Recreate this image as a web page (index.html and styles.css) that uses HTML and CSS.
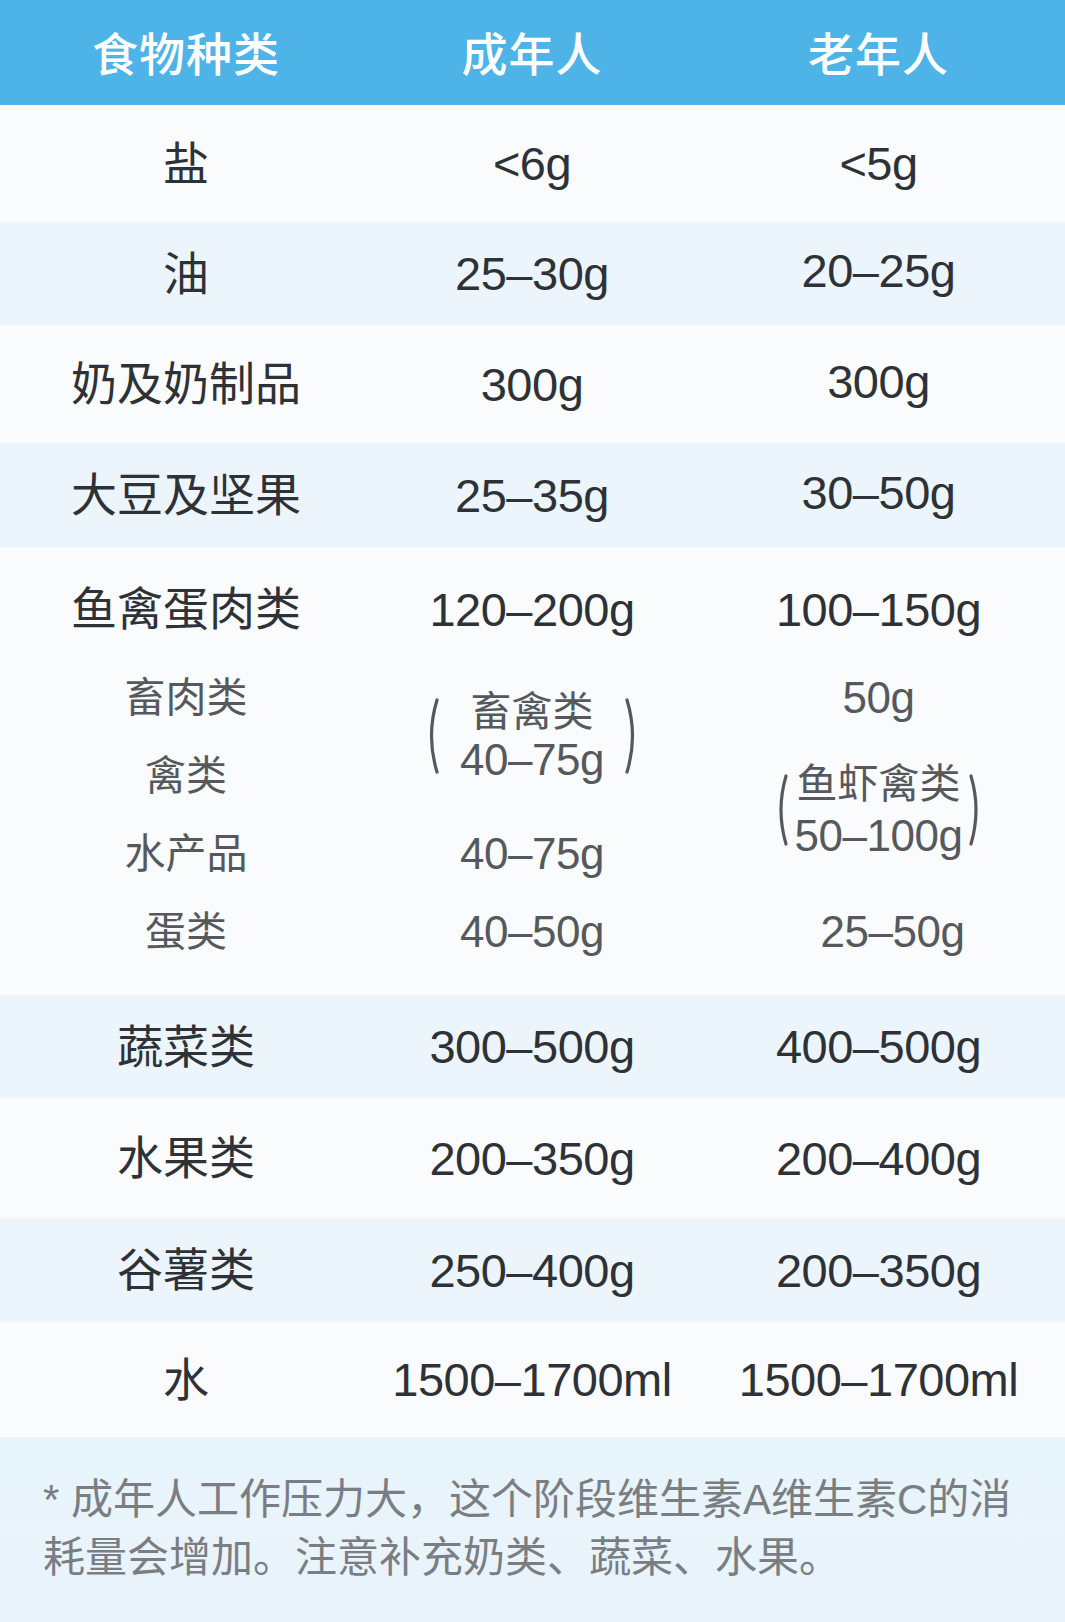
FILE: index.html
```html
<!DOCTYPE html>
<html lang="zh-CN">
<head>
<meta charset="utf-8">
<title>膳食推荐量</title>
<link rel="stylesheet" href="styles.css">
</head>
<body>
<div class="sheet">
  <div class="row head">
    <div class="cell">食物种类</div>
    <div class="cell">成年人</div>
    <div class="cell">老年人</div>
  </div>
  <div class="row r-salt">
    <div class="cell">盐</div>
    <div class="cell num">&lt;6g</div>
    <div class="cell num">&lt;5g</div>
  </div>
  <div class="row alt r-oil">
    <div class="cell">油</div>
    <div class="cell num">25–30g</div>
    <div class="cell num up">20–25g</div>
  </div>
  <div class="row r-milk">
    <div class="cell">奶及奶制品</div>
    <div class="cell num">300g</div>
    <div class="cell num up">300g</div>
  </div>
  <div class="row alt r-soy">
    <div class="cell">大豆及坚果</div>
    <div class="cell num">25–35g</div>
    <div class="cell num up">30–50g</div>
  </div>
  <div class="group">
    <div class="g-main c1">鱼禽蛋肉类</div>
    <div class="g-main c2 num">120–200g</div>
    <div class="g-main c3 num">100–150g</div>

    <div class="sub s1 c1">畜肉类</div>
    <div class="sub s2 c1">禽类</div>
    <div class="sub s3 c1">水产品</div>
    <div class="sub s4 c1">蛋类</div>

    <div class="bracket b2 c2">
      <svg class="paren" viewBox="0 0 16 76" width="16" height="76"><path d="M13 2 Q2 38 13 74"/></svg>
      <div class="stack">
        <span>畜禽类</span>
        <span class="num">40–75g</span>
      </div>
      <svg class="paren" viewBox="0 0 16 76" width="16" height="76"><path d="M3 2 Q14 38 3 74"/></svg>
    </div>
    <div class="sub s3 c2 num">40–75g</div>
    <div class="sub s4 c2 num">40–50g</div>

    <div class="sub s1 c3 num">50g</div>
    <div class="bracket b3 c3">
      <svg class="paren" viewBox="0 0 16 72" width="16" height="72"><path d="M13 2 Q3 36 13 70"/></svg>
      <div class="stack wide">
        <span>鱼虾禽类</span>
        <span class="num">50–100g</span>
      </div>
      <svg class="paren" viewBox="0 0 16 72" width="16" height="72"><path d="M3 2 Q13 36 3 70"/></svg>
    </div>
    <div class="sub s4 c3 num shift">25–50g</div>
  </div>
  <div class="row alt r-veg">
    <div class="cell">蔬菜类</div>
    <div class="cell num">300–500g</div>
    <div class="cell num">400–500g</div>
  </div>
  <div class="row r-fruit">
    <div class="cell">水果类</div>
    <div class="cell num">200–350g</div>
    <div class="cell num">200–400g</div>
  </div>
  <div class="row alt r-grain">
    <div class="cell">谷薯类</div>
    <div class="cell num">250–400g</div>
    <div class="cell num">200–350g</div>
  </div>
  <div class="row r-water">
    <div class="cell">水</div>
    <div class="cell num">1500–1700ml</div>
    <div class="cell num">1500–1700ml</div>
  </div>
  <div class="note">
    <p>* 成年人工作压力大，这个阶段维生素A维生素C的消耗量会增加。注意补充奶类、蔬菜、水果。</p>
  </div>
</div>
</body>
</html>
```
FILE: styles.css
```css
html, body {
  margin: 0;
  padding: 0;
}
body {
  width: 1065px;
  height: 1622px;
  overflow: hidden;
  background: #f9fbfd;
  font-family: "Liberation Sans", "Noto Sans CJK SC", sans-serif;
  color: #2e3236;
}
.sheet {
  display: flex;
  flex-direction: column;
  width: 1065px;
}
.row {
  display: grid;
  grid-template-columns: 372px 320px 1fr;
  align-items: center;
  background: #f9fbfd;
}
.row.alt {
  background: #ecf5fc;
}
.cell {
  text-align: center;
  font-size: 46px;
  line-height: 1;
}
.num {
  font-size: 47px;
  letter-spacing: -0.5px;
}
.up {
  position: relative;
  top: -3px;
}
.head {
  height: 105px;
  background: #4eb3e7;
  color: #ffffff;
}
.head .cell {
  font-family: "Noto Sans CJK SC", sans-serif;
  font-size: 46px;
  font-weight: 500;
  letter-spacing: 1px;
  padding-bottom: 4px;
}
.r-salt { height: 117px; }
.r-oil { height: 103px; }
.r-milk { height: 118px; }
.r-soy { height: 104px; }
.r-veg { height: 103px; }
.r-fruit { height: 120px; }
.r-grain { height: 104px; }
.r-water { height: 115px; }

.group {
  display: grid;
  grid-template-columns: 372px 320px 1fr;
  grid-template-rows: 104px 78px 78px 78px 78px;
  padding: 8px 0 24px;
  height: 448px;
  box-sizing: border-box;
  background: #f9fbfd;
}
.g-main {
  grid-row: 1;
  display: flex;
  align-items: center;
  justify-content: center;
  padding-top: 4px;
  font-size: 46px;
  line-height: 1;
}
.g-main.num { font-size: 47px; }
.c1 { grid-column: 1; }
.c2 { grid-column: 2; }
.c3 { grid-column: 3; }
.sub {
  display: flex;
  align-items: center;
  justify-content: center;
  font-size: 41px;
  line-height: 1;
  color: #56595c;
}
.sub.num { font-size: 44px; }
.s1 { grid-row: 2; }
.s2 { grid-row: 3; }
.s3 { grid-row: 4; }
.s4 { grid-row: 5; }
.shift { padding-left: 28px; }
.bracket {
  display: flex;
  align-items: center;
  justify-content: center;
  gap: 20px;
  color: #56595c;
}
.b2 {
  grid-row: 2 / span 2;
  padding-bottom: 2px;
}
.b3 {
  grid-row: 3 / span 2;
  gap: 6px;
  padding-bottom: 10px;
}
.stack {
  display: flex;
  flex-direction: column;
  align-items: center;
  gap: 6px;
}
.stack span {
  font-size: 41px;
  line-height: 41px;
}
.stack span.num {
  font-size: 44px;
}
.stack.wide { gap: 10px; }
.paren path {
  fill: none;
  stroke: #56595c;
  stroke-width: 3.2;
  stroke-linecap: round;
}
.note {
  height: 185px;
  box-sizing: border-box;
  padding: 34px 30px 0 43px;
  background: linear-gradient(180deg, #e8f4fb 0%, #e9f3fb 100%);
}
.note p {
  margin: 0;
  font-size: 42px;
  line-height: 58px;
  color: #7a7e82;
}
```
